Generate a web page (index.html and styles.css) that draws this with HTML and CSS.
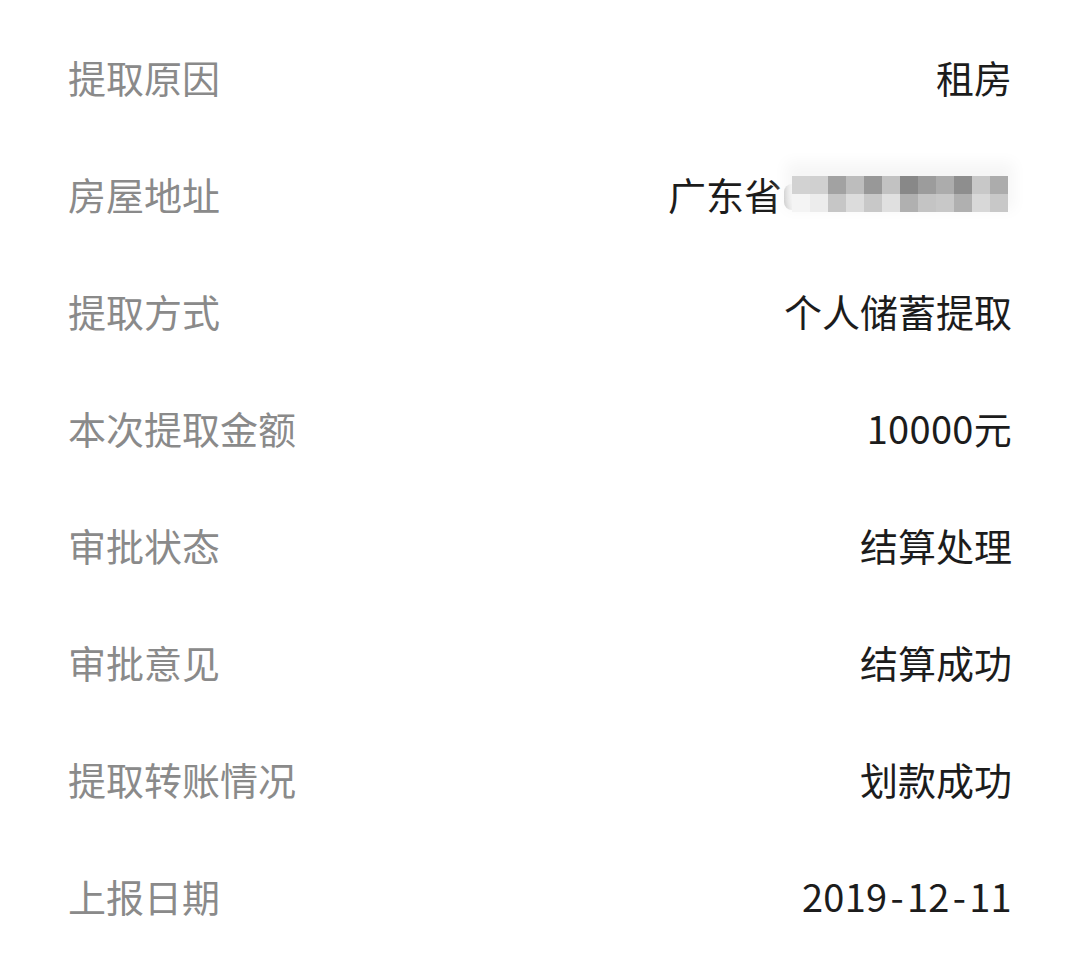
FILE: index.html
```html
<!DOCTYPE html>
<html lang="zh-CN">
<head>
<meta charset="utf-8">
<link rel="stylesheet" href="styles.css">
</head>
<body>
<div class="list">
  <div class="row"><span class="label">提取原因</span><span class="value">租房</span></div>
  <div class="row"><span class="label">房屋地址</span><span class="value addr">广东省<span class="frag"></span><span class="mosaic">
    <i class="a1"></i><i class="a2"></i><i class="a3"></i><i class="a4"></i><i class="a5"></i><i class="a6"></i><i class="a7"></i><i class="a8"></i><i class="a9"></i><i class="a10"></i><i class="a11"></i><i class="a12"></i>
    <i class="b1"></i><i class="b2"></i><i class="b3"></i><i class="b4"></i><i class="b5"></i><i class="b6"></i><i class="b7"></i><i class="b8"></i><i class="b9"></i><i class="b10"></i><i class="b11"></i><i class="b12"></i>
  </span></span></div>
  <div class="row"><span class="label">提取方式</span><span class="value">个人储蓄提取</span></div>
  <div class="row"><span class="label">本次提取金额</span><span class="value num">10000元</span></div>
  <div class="row"><span class="label">审批状态</span><span class="value">结算处理</span></div>
  <div class="row"><span class="label">审批意见</span><span class="value">结算成功</span></div>
  <div class="row"><span class="label">提取转账情况</span><span class="value">划款成功</span></div>
  <div class="row"><span class="label">上报日期</span><span class="value num">2019<span class="dash">-</span>12<span class="dash">-</span>11</span></div>
</div>
</body>
</html>
```

FILE: styles.css
```css
html, body {
  margin: 0;
  padding: 0;
  background: #ffffff;
}
body {
  font-family: "Noto Sans CJK SC", "Noto Sans", sans-serif;
  width: 1080px;
  height: 960px;
  overflow: hidden;
}
.list {
  padding: 18px 68px 0 68px;
  display: flex;
  flex-direction: column;
}
.row {
  height: 117px;
  display: flex;
  align-items: center;
  justify-content: space-between;
  font-size: 38px;
  line-height: 1;
}
.label {
  color: #8a8a8a;
}
.value {
  color: #1c1c1c;
}
.num {
  letter-spacing: 0.3px;
}
.dash {
  display: inline-block;
  margin: 0 3px;
}
.addr {
  display: flex;
  align-items: center;
  margin-right: 4px;
}
.frag {
  display: block;
  width: 8px;
  height: 26px;
  margin-left: 2px;
  margin-top: 6px;
  border-radius: 8px 0 0 8px;
  background: linear-gradient(90deg, #bdbdbd, #e8e8e8);
}
.mosaic {
  display: grid;
  grid-template-columns: repeat(12, 18px);
  grid-template-rows: 18px 18px;
  box-shadow: 0 -8px 14px 6px #f6f6f6;
}
.mosaic i { display: block; }
.a1 { background: #d2d2d2; }
.a2 { background: #d0d0d0; }
.a3 { background: #a2a2a2; }
.a4 { background: #bdbdbd; }
.a5 { background: #989898; }
.a6 { background: #c2c2c2; }
.a7 { background: #888888; }
.a8 { background: #9c9c9c; }
.a9 { background: #acacac; }
.a10 { background: #8e8e8e; }
.a11 { background: #c8c8c8; }
.a12 { background: #acacac; }
.b1 { background: #f4f4f4; }
.b2 { background: #ececec; }
.b3 { background: #c6c6c6; }
.b4 { background: #dcdcdc; }
.b5 { background: #c8c8c8; }
.b6 { background: #e0e0e0; }
.b7 { background: #b0b0b0; }
.b8 { background: #c4c4c4; }
.b9 { background: #c8c8c8; }
.b10 { background: #b0b0b0; }
.b11 { background: #d8d8d8; }
.b12 { background: #c8c8c8; }
```
